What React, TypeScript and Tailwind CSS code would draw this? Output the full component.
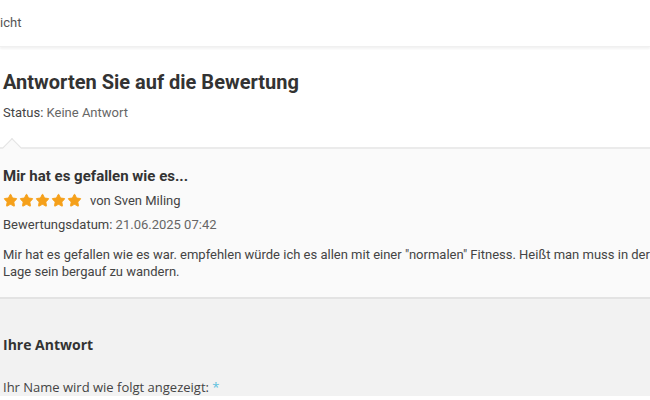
import { Star } from "lucide-react";

const roboto = "font-['Roboto',sans-serif]";
const openSans = "font-['Open_Sans',sans-serif]";

function Stars() {
  return (
    <div className="flex gap-px">
      {[0, 1, 2, 3, 4].map((i) => (
        <Star key={i} size={15} className="fill-[#f5a01a] text-[#f5a01a]" strokeWidth={1.5} />
      ))}
    </div>
  );
}

export default function App() {
  return (
    <div className={`h-[400px] w-[650px] overflow-hidden bg-white text-[#333] ${roboto}`}>
      {/* top strip, its text runs off the left edge */}
      <div className="h-[47px] border-b border-[#f0f0f0] pt-[10px] shadow-[0_2px_2px_rgb(0_0_0/0.05)]">
        <span className="text-[13px] text-[#555]">icht</span>
      </div>

      <div className="px-[3px] pt-[22px]">
        <h1 className="text-[20px] font-bold leading-[26px] text-[#333]">Antworten Sie auf die Bewertung</h1>
        <p className="mt-[9px] text-[13px] leading-[18px] text-[#444]">
          Status: <span className="text-[#666]">Keine Antwort</span>
        </p>
      </div>

      <div className="relative mt-[25px] border-t-2 border-[#ebebeb] bg-[#fafafa]">
        <div className="absolute left-[5px] top-[-8px] h-[14px] w-[14px] rotate-45 border-l border-t border-[#e3e3e3] bg-[#fafafa]" />
        <div className="relative px-[3px] pb-[17px] pt-[17px]">
          <h2 className="text-[15px] font-bold leading-[20px] text-[#333]">Mir hat es gefallen wie es...</h2>
          <div className="mt-[5px] flex items-center gap-[8px]">
            <Stars />
            <span className="text-[13px] text-[#444]">von Sven Miling</span>
          </div>
          <p className="mt-[5px] text-[13px] leading-[18px] text-[#444]">
            Bewertungsdatum: <span className="text-[#666]">21.06.2025 07:42</span>
          </p>
          <p className="mt-[12px] w-[660px] text-[13px] leading-[17px] text-[#444]">
            Mir hat es gefallen wie es war. empfehlen würde ich es allen mit einer "normalen" Fitness. Heißt man muss in der Lage sein bergauf zu wandern.
          </p>
        </div>
      </div>

      <div className={`border-t-2 border-[#e3e3e3] bg-[#f2f2f2] px-[3px] pt-[36px] ${openSans}`}>
        <h3 className="text-[14px] font-bold leading-[20px] text-[#333]">Ihre Antwort</h3>
        <p className="mt-[23px] text-[13px] leading-[18px] text-[#444]">
          Ihr Name wird wie folgt angezeigt: <span className="text-[#5bc0de]">*</span>
        </p>
      </div>
    </div>
  );
}
